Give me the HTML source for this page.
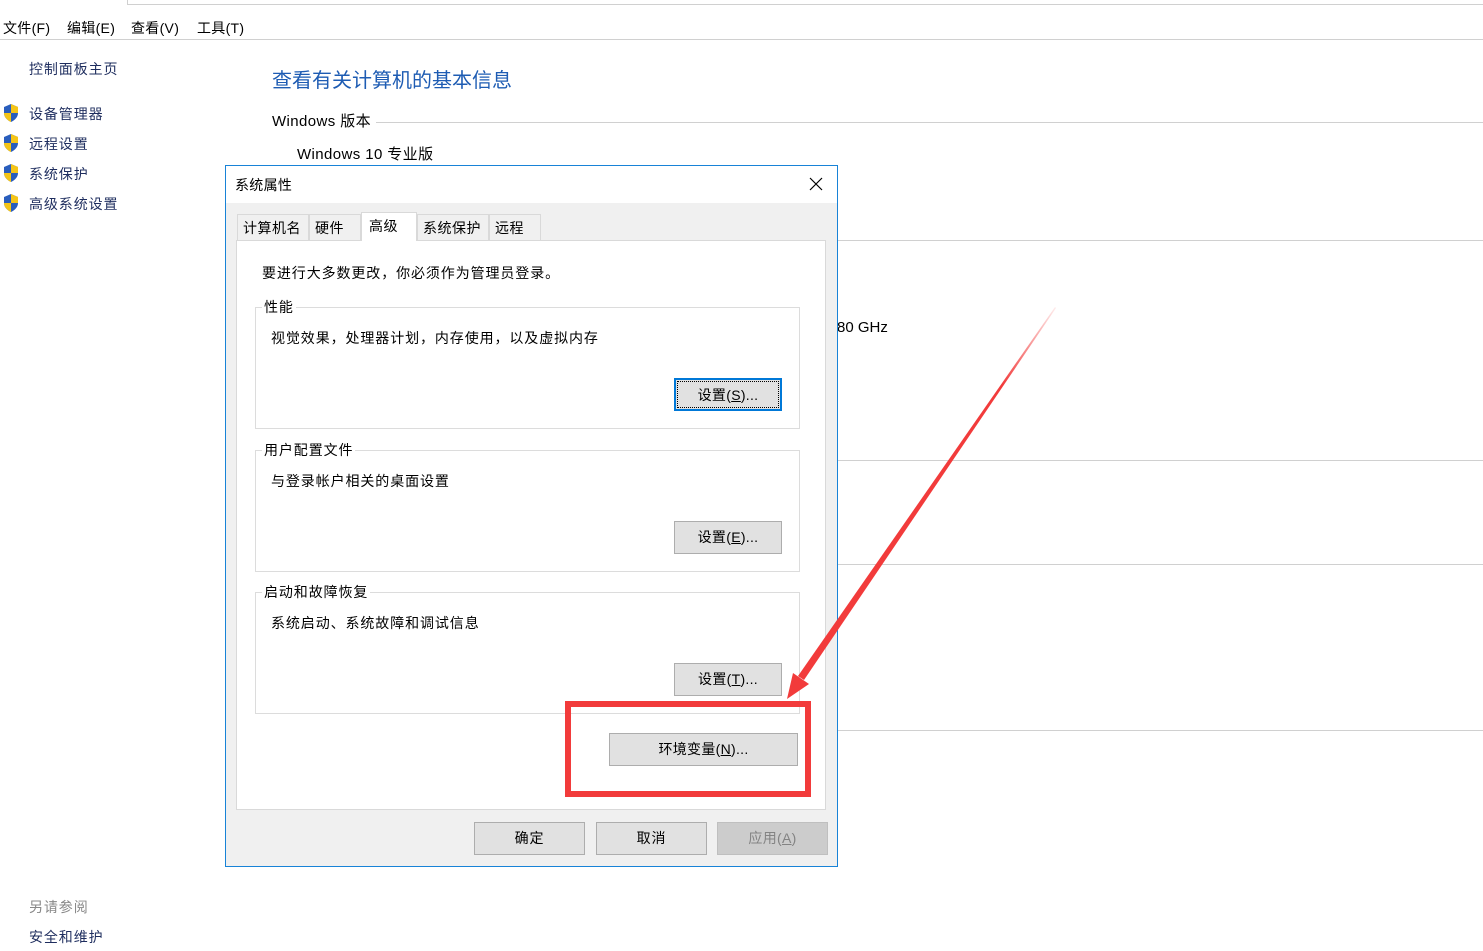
<!DOCTYPE html>
<html><head><meta charset="utf-8"><style>
*{margin:0;padding:0;box-sizing:border-box}
body{width:1483px;height:951px;background:#fff;position:relative;overflow:hidden;font-family:"Liberation Sans","Noto Sans CJK SC",sans-serif;font-size:14px;color:#000;letter-spacing:0.9px}
.a{position:absolute;white-space:nowrap}
.hl{position:absolute;height:1px;background:#d0d0d0}
.btn{position:absolute;background:#e1e1e1;border:1px solid #adadad;text-align:center;line-height:30px;font-size:14px}
.grp{position:absolute;border:1px solid #dcdcdc}
.gl{position:absolute;background:#fff;padding:0 2px;top:-10px;left:6px;line-height:18px}
.tab{position:absolute;top:214px;height:26px;background:#f0f0f0;border:1px solid #d9d9d9;border-bottom:none;line-height:26px;padding-left:5px;letter-spacing:0.5px}
.sh{position:absolute;left:2px;width:18px;height:20px}
</style></head><body>
<div style="position:absolute;left:127px;top:0;width:1400px;height:5px;border-left:1px solid #d0d0d0;border-bottom:1px solid #d0d0d0"></div>
<div class="a" style="left:3px;top:18px;letter-spacing:0.3px">文件(F)</div>
<div class="a" style="left:67px;top:18px;letter-spacing:0.3px">编辑(E)</div>
<div class="a" style="left:131px;top:18px;letter-spacing:0.3px">查看(V)</div>
<div class="a" style="left:197px;top:18px;letter-spacing:0.3px">工具(T)</div>
<div class="hl" style="left:0;top:39px;width:1483px"></div>
<div class="a" style="left:29px;top:59px;color:#1e2d5e">控制面板主页</div>
<svg class="sh" style="top:103px" viewBox="0 0 18 20"><path d="M9 1L16 4V10C16 14 13 17 9 19C5 17 2 14 2 10V4Z" fill="#2a5ebd"/><path d="M9 1L16 4V10H9Z" fill="#f5c518"/><path d="M2 10H9V19C5 17 2 14 2 10Z" fill="#f5c518"/></svg>
<svg class="sh" style="top:133px" viewBox="0 0 18 20"><path d="M9 1L16 4V10C16 14 13 17 9 19C5 17 2 14 2 10V4Z" fill="#2a5ebd"/><path d="M9 1L16 4V10H9Z" fill="#f5c518"/><path d="M2 10H9V19C5 17 2 14 2 10Z" fill="#f5c518"/></svg>
<svg class="sh" style="top:163px" viewBox="0 0 18 20"><path d="M9 1L16 4V10C16 14 13 17 9 19C5 17 2 14 2 10V4Z" fill="#2a5ebd"/><path d="M9 1L16 4V10H9Z" fill="#f5c518"/><path d="M2 10H9V19C5 17 2 14 2 10Z" fill="#f5c518"/></svg>
<svg class="sh" style="top:193px" viewBox="0 0 18 20"><path d="M9 1L16 4V10C16 14 13 17 9 19C5 17 2 14 2 10V4Z" fill="#2a5ebd"/><path d="M9 1L16 4V10H9Z" fill="#f5c518"/><path d="M2 10H9V19C5 17 2 14 2 10Z" fill="#f5c518"/></svg>
<div class="a" style="left:29px;top:104px;color:#1e2d5e">设备管理器</div>
<div class="a" style="left:29px;top:134px;color:#1e2d5e">远程设置</div>
<div class="a" style="left:29px;top:164px;color:#1e2d5e">系统保护</div>
<div class="a" style="left:29px;top:194px;color:#1e2d5e">高级系统设置</div>
<div class="a" style="left:29px;top:897px;color:#888">另请参阅</div>
<div class="a" style="left:29px;top:927px;color:#1e2d5e">安全和维护</div>
<div class="a" style="left:272px;top:64px;font-size:20px;color:#1e5cb3;letter-spacing:0">查看有关计算机的基本信息</div>
<div class="a" style="left:272px;top:110px;font-size:15px;letter-spacing:0.4px">Windows 版本</div>
<div class="hl" style="left:376px;top:122px;width:1107px"></div>
<div class="a" style="left:297px;top:143px;font-size:15px;letter-spacing:0.4px">Windows 10 专业版</div>
<div class="hl" style="left:838px;top:240px;width:645px"></div>
<div class="hl" style="left:838px;top:460px;width:645px"></div>
<div class="hl" style="left:838px;top:564px;width:645px"></div>
<div class="hl" style="left:838px;top:730px;width:645px"></div>
<div class="a" style="left:837px;top:319px;font-size:15px;letter-spacing:0">80 GHz</div>

<div style="position:absolute;left:225px;top:165px;width:613px;height:702px;border:1px solid #1883d7;background:#f0f0f0"></div>
<div style="position:absolute;left:226px;top:166px;width:611px;height:37px;background:#fff"></div>
<div class="a" style="left:235px;top:175px;letter-spacing:0.3px">系统属性</div>
<svg style="position:absolute;left:809px;top:177px" width="14" height="14"><path d="M1 1L13 13M13 1L1 13" stroke="#000" stroke-width="1.2"/></svg>
<div style="position:absolute;left:236px;top:240px;width:590px;height:570px;background:#fff;border:1px solid #d9d9d9"></div>
<div class="tab" style="left:237px;width:72px">计算机名</div>
<div class="tab" style="left:309px;width:52px">硬件</div>
<div class="tab" style="left:361px;top:212px;height:29px;width:56px;background:#fff;padding-left:7px;line-height:26px">高级</div>
<div class="tab" style="left:417px;width:72px">系统保护</div>
<div class="tab" style="left:489px;width:52px">远程</div>
<div class="a" style="left:262px;top:263px">要进行大多数更改，你必须作为管理员登录。</div>
<div class="grp" style="left:255px;top:307px;width:545px;height:122px"><span class="gl">性能</span></div>
<div class="a" style="left:271px;top:328px">视觉效果，处理器计划，内存使用，以及虚拟内存</div>
<div class="btn" style="left:674px;top:378px;width:108px;height:33px;border:2px solid #0078d7;line-height:28px;letter-spacing:0.3px"><span style="display:block;margin:1px;border:1px dotted #000;height:27px;line-height:26px">设置(<u>S</u>)...</span></div>
<div class="grp" style="left:255px;top:450px;width:545px;height:122px"><span class="gl">用户配置文件</span></div>
<div class="a" style="left:271px;top:471px">与登录帐户相关的桌面设置</div>
<div class="btn" style="left:674px;top:521px;width:108px;height:33px;letter-spacing:0.3px">设置(<u>E</u>)...</div>
<div class="grp" style="left:255px;top:592px;width:545px;height:122px"><span class="gl">启动和故障恢复</span></div>
<div class="a" style="left:271px;top:613px">系统启动、系统故障和调试信息</div>
<div class="btn" style="left:674px;top:663px;width:108px;height:33px;letter-spacing:0.3px">设置(<u>T</u>)...</div>
<div class="btn" style="left:609px;top:733px;width:189px;height:33px;letter-spacing:0.3px">环境变量(<u>N</u>)...</div>
<div class="btn" style="left:474px;top:822px;width:111px;height:33px">确定</div>
<div class="btn" style="left:596px;top:822px;width:111px;height:33px">取消</div>
<div class="btn" style="left:717px;top:822px;width:111px;height:33px;background:#cccccc;border-color:#bfbfbf;color:#838383;letter-spacing:0.3px">应用(<u>A</u>)</div>

<div style="position:absolute;left:565px;top:701px;width:246px;height:96px;border:6px solid #f23b3b"></div>
<svg style="position:absolute;left:0;top:0" width="1483" height="951">
<defs><linearGradient id="g" x1="1055" y1="307" x2="790" y2="698" gradientUnits="userSpaceOnUse"><stop offset="0" stop-color="#f23b3b" stop-opacity="0.1"/><stop offset="0.2" stop-color="#f23b3b"/></linearGradient></defs>
<path d="M1055 307L1056 308L804 680L798 676Z" fill="url(#g)"/>
<path d="M787 699L793 673L809 684Z" fill="#f23b3b"/>
</svg>
</body></html>
